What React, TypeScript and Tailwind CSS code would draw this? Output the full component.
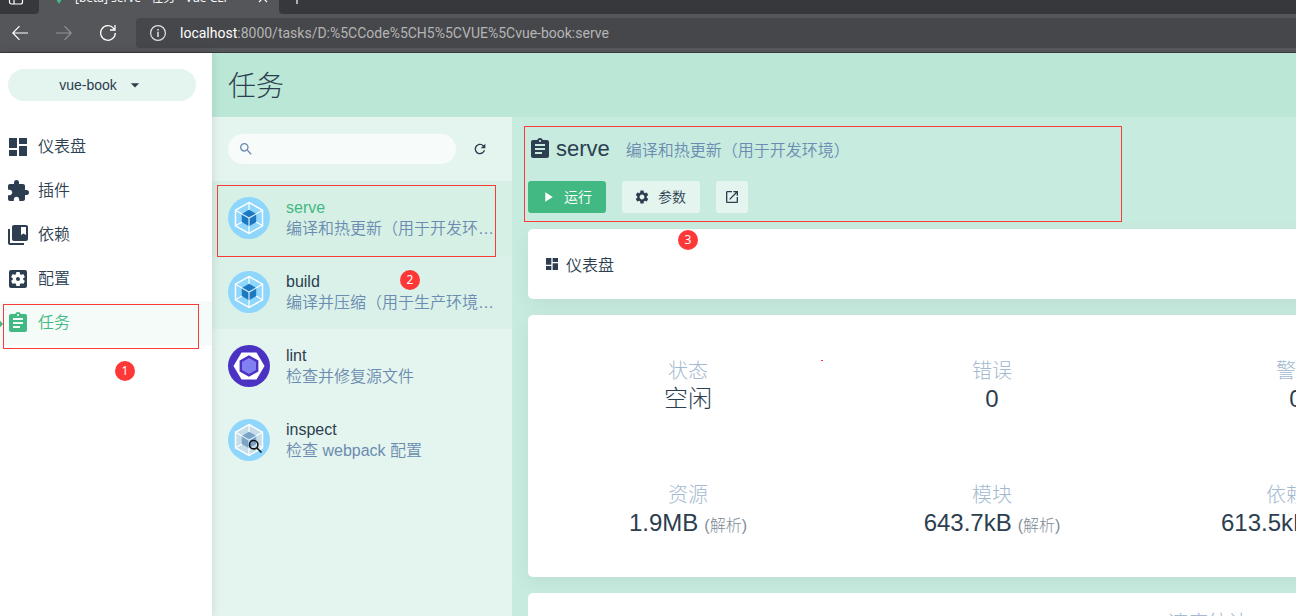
import React, { useState } from "react";
import {
  MdArrowDropDown,
  MdAssignment,
  MdCollectionsBookmark,
  MdDashboard,
  MdExtension,
  MdOpenInNew,
  MdPlayArrow,
  MdRefresh,
  MdSearch,
  MdSettings,
  MdSettingsApplications
} from "react-icons/md";

const navItems = [
  { label: "仪表盘", icon: MdDashboard },
  { label: "插件", icon: MdExtension },
  { label: "依赖", icon: MdCollectionsBookmark },
  { label: "配置", icon: MdSettingsApplications },
  { label: "任务", icon: MdAssignment, active: true }
];

const tasks = [
  { name: "serve", description: "编译和热更新（用于开发环境）", icon: "webpack", row: "bg-[#d7f0e5]", active: true },
  { name: "build", description: "编译并压缩（用于生产环境…", icon: "webpack", row: "bg-[#daf1e9]" },
  { name: "lint", description: "检查并修复源文件", icon: "eslint", row: "" },
  { name: "inspect", description: "检查 webpack 配置", icon: "inspect", row: "" }
];

const stats = [
  { label: "状态", value: "空闲" },
  { label: "错误", value: "0" },
  { label: "警告", value: "0" },
  { label: "资源", value: "1.9MB", note: "(解析)" },
  { label: "模块", value: "643.7kB", note: "(解析)" },
  { label: "依赖项", value: "613.5kB", note: "(95.3%)" }
];

function WebpackIcon({ muted = false }: { muted?: boolean }) {
  const cube = muted ? "#7aa3c6" : "#1c78c0";
  return (
    <svg className="size-[42px] shrink-0" viewBox="0 0 42 42" aria-hidden="true">
      <circle cx="21" cy="21" r="21" fill="#8ed6fb" />
      <path d="M21 5.5 34.5 13.2v15.6L21 36.5 7.5 28.8V13.2z" fill={muted ? "#c5dde9" : "#8ed6fb"} stroke="#fff" strokeWidth="1.5" />
      <path d="M21 5.5V13M34.5 13.2 28 17M34.5 28.8 28 25M21 36.5V29M7.5 28.8 14 25M7.5 13.2 14 17" stroke="#fff" strokeWidth="1.2" />
      <path d="M21 12.8 28.2 16.9v8.2L21 29.2l-7.2-4.1v-8.2z" fill={cube} />
      <path d="M13.8 16.9 21 21l7.2-4.1M21 21v8.2" fill="none" stroke="#d5ecf9" strokeWidth="1.2" />
      {muted && (
        <g fill="none" stroke="#111" strokeWidth="1.6">
          <circle cx="25.7" cy="25.7" r="4.2" />
          <path d="m28.7 28.7 4.8 4.8" />
        </g>
      )}
    </svg>
  );
}

function EslintIcon() {
  return (
    <svg className="size-[42px] shrink-0" viewBox="0 0 42 42" aria-hidden="true">
      <circle cx="21" cy="21" r="21" fill="#4b32c3" />
      <path d="M13.5 7.5h15L36.5 21l-8 13.5h-15L5.5 21z" fill="#fff" />
      <path d="m21 10.2 9.4 5.4v10.8L21 31.8l-9.4-5.4V15.6z" fill="#4b32c3" />
      <path d="m21 13 7 4v8l-7 4-7-4v-8z" fill="#8080f2" />
    </svg>
  );
}

function TaskIcon({ type }: { type: string }) {
  if (type === "eslint") return <EslintIcon />;
  return <WebpackIcon muted={type === "inspect"} />;
}

function BrowserBar() {
  return (
    <div className="shrink-0 bg-[#55565a] border-b border-[#39393c] font-normal text-white font-['Open_Sans','Noto_Sans_CJK_SC',sans-serif]">
      <div className="flex h-[14px] items-end overflow-hidden bg-[#55565a]">
        <button type="button" aria-label="标签页操作" className="flex h-6 w-[39px] items-start pl-2 bg-[#37383b] rounded-br">
          <svg className="size-4" viewBox="0 0 16 16" fill="none" stroke="#fff" strokeWidth="1.2">
            <rect x="1.5" y="1" width="13" height="13" rx="2" />
            <path d="M1.5 8h13M6 8v6" />
          </svg>
        </button>
        <div className="flex h-9 w-60 items-start pt-3 pl-3">
          <svg className="size-4" viewBox="0 0 16 16">
            <path d="M0 1h3l5 8 5-8h3L8 14z" fill="#42b983" />
          </svg>
          <span className="grow pl-2 text-xs leading-4 whitespace-nowrap">[beta] serve - 任务 - Vue CLI</span>
          <button type="button" aria-label="关闭标签页" className="mr-2">
            <svg className="size-4" viewBox="0 0 16 16" stroke="#fff" strokeWidth="1.2">
              <path d="m4 4 8 8M12 4l-8 8" />
            </svg>
          </button>
        </div>
        <div className="flex h-6 grow items-start rounded-bl bg-[#37383b] pl-2.5">
          <button type="button" aria-label="新建标签页">
            <svg className="size-4" viewBox="0 0 16 16" stroke="#fff" strokeWidth="1.2">
              <path d="M8 1v13M1 7h14" />
            </svg>
          </button>
        </div>
      </div>
      <div className="flex h-[38px] items-center">
        <div className="flex w-[136px] shrink-0 items-center gap-7 pl-3">
          <button type="button" aria-label="后退">
            <svg className="size-4" viewBox="0 0 16 16" fill="none" stroke="#fff" strokeWidth="1.2">
              <path d="M16 8H.8M7.5 1.2.8 8l6.7 6.8" />
            </svg>
          </button>
          <button type="button" aria-label="前进">
            <svg className="size-4" viewBox="0 0 16 16" fill="none" stroke="#929397" strokeWidth="1.2">
              <path d="M0 8h15.2M8.5 1.2 15.2 8l-6.7 6.8" />
            </svg>
          </button>
          <button type="button" aria-label="刷新">
            <svg className="size-4" viewBox="0 0 16 16" fill="none" stroke="#fff" strokeWidth="1.3">
              <path d="M15.3 8A7.3 7.3 0 1 1 13.6 3.3L15 5M15 0v5h-5" />
            </svg>
          </button>
        </div>
        <div className="flex h-[30px] grow items-center gap-3.5 rounded-l bg-[#46474a] pl-3.5">
          <svg className="size-4" viewBox="0 0 16 16" fill="none" stroke="#e4e4e5" strokeWidth="1.2">
            <circle cx="8" cy="8" r="7.4" />
            <path d="M8 6.8V12M8 4v1.5" strokeWidth="1.5" />
          </svg>
          <div className="font-['Roboto',sans-serif] text-sm leading-5 whitespace-nowrap text-[#b5b5b7]">
            <span className="text-white">localhost</span>:8000/tasks/D:%5CCode%5CH5%5CVUE%5Cvue-book:serve
          </div>
        </div>
      </div>
    </div>
  );
}

function Sidebar() {
  return (
    <aside className="z-10 w-[212px] shrink-0 bg-white shadow-[0_0_10px_rgba(0,0,0,0.12)]">
      <div className="pt-4 pr-4 pl-2">
        <button type="button" className="flex h-8 w-full items-center justify-center gap-2 rounded-full bg-[#e4f4ee] text-sm">
          vue-book
          <MdArrowDropDown className="size-5" />
        </button>
      </div>
      <nav className="mt-6">
        {navItems.map((item) => (
          <a
            key={item.label}
            href="#"
            className={
              item.active
                ? "relative flex h-11 items-center gap-2 bg-[#f5fbf8] pl-1.5 text-[#42b983]"
                : "flex h-11 items-center gap-2 pl-1.5"
            }
          >
            {item.active && <span className="absolute top-5 -left-1 size-1.5 rotate-45 bg-[#42b983]" />}
            <item.icon className="size-6" />
            {item.label}
          </a>
        ))}
      </nav>
    </aside>
  );
}

function TaskList() {
  const [search, setSearch] = useState("");

  return (
    <section className="w-[300px] shrink-0 bg-[#e4f4ee]">
      <div className="flex h-16 items-center gap-2 px-4">
        <label className="flex h-[30px] grow items-center gap-2 rounded-full bg-[#f7fbfa] px-2.5">
          <MdSearch className="size-4 shrink-0 text-[#6b8cb0]" />
          <input
            type="text"
            aria-label="搜索任务"
            value={search}
            onChange={(e) => setSearch(e.target.value)}
            className="w-full min-w-0 bg-transparent text-sm outline-none"
          />
        </label>
        <button type="button" aria-label="刷新任务" className="flex size-8 items-center justify-center">
          <MdRefresh className="size-4" />
        </button>
      </div>
      <ul>
        {tasks.filter((task) => task.name.includes(search)).map((task) => (
          <li key={task.name} className={task.row}>
            <a href="#" className="flex h-[74px] items-center gap-4 px-4">
              <TaskIcon type={task.icon} />
              <div className="min-w-0 leading-[21px]">
                <div className={task.active ? "text-[#42b983]" : ""}>{task.name}</div>
                <div className="truncate text-[#6b8cb0]">{task.description}</div>
              </div>
            </a>
          </li>
        ))}
      </ul>
    </section>
  );
}

function TaskDetails() {
  return (
    <section className="min-w-0 grow overflow-hidden bg-[#c7ebdf] px-4">
      <div className="flex h-16 items-center gap-4">
        <h2 className="flex items-center gap-1 text-[22px] leading-8">
          <MdAssignment className="size-6" />
          serve
        </h2>
        <span className="pt-1 text-[#6b8cb0]">编译和热更新（用于开发环境）</span>
      </div>
      <div className="flex gap-4 text-sm">
        <button type="button" className="flex h-8 w-[78px] items-center gap-2 rounded-[3px] bg-[#42b983] pl-3 text-white">
          <MdPlayArrow className="size-4" />
          运行
        </button>
        <button type="button" className="flex h-8 w-[78px] items-center gap-2 rounded-[3px] bg-[#e4f4ee] pl-3">
          <MdSettings className="size-4" />
          参数
        </button>
        <button type="button" aria-label="打开应用" className="flex size-8 items-center justify-center rounded-[3px] bg-[#e4f4ee]">
          <MdOpenInNew className="size-4" />
        </button>
      </div>

      {/* dashboard keeps its full width and runs off the right side */}
      <div className="mt-4 flex w-[1360px] flex-col gap-4">
        <div className="flex h-[70px] items-center gap-1.5 rounded-[5px] bg-white px-4 shadow-[0_6px_20px_rgba(0,0,0,0.05)]">
          <MdDashboard className="size-4" />
          <span className="pt-1">仪表盘</span>
        </div>
        <div className="rounded-[5px] bg-white px-2 pt-2 pb-1.5 shadow-[0_6px_20px_rgba(0,0,0,0.05)]">
          <dl className="grid w-[912px] grid-cols-3 font-light">
            {stats.map((stat) => (
              <div key={stat.label} className="flex h-[124px] flex-col items-center justify-center">
                <dt className="text-xl leading-7 text-[#a3b9d0]">{stat.label}</dt>
                <dd className="flex items-baseline gap-1.5 text-2xl leading-7">
                  {stat.value}
                  {stat.note && <span className="text-base leading-6 text-[#808b96]">{stat.note}</span>}
                </dd>
              </div>
            ))}
          </dl>
        </div>
        <div className="rounded-[5px] bg-white pt-4 pb-6 text-center text-xl leading-7 font-light text-[#a3b9d0]">速度统计</div>
      </div>
    </section>
  );
}

function Annotations() {
  return (
    <div className="pointer-events-none font-['Noto_Sans',sans-serif] text-xs font-normal text-white">
      <div className="absolute top-[304px] left-[3px] z-20 h-[45px] w-[196px] border border-[#fb3a3a]" />
      <div className="absolute top-[185px] left-[217px] z-20 h-[72px] w-[279px] border border-[#fb3a3a]" />
      <div className="absolute top-[126px] left-[524px] z-20 h-24 w-[598px] border border-[#fb3a3a]" />
      <span className="absolute top-[361px] left-[115px] z-20 flex size-5 items-center justify-center rounded-full bg-[#fe3737]">1</span>
      <span className="absolute top-[270px] left-[400px] z-20 flex size-5 items-center justify-center rounded-full bg-[#fe3737]">2</span>
      <span className="absolute top-[230px] left-[678px] z-20 flex size-5 items-center justify-center rounded-full bg-[#fe3737]">3</span>
      <div className="absolute top-[360px] left-[821px] z-20 h-px w-0.5 bg-[#fe3737]" />
    </div>
  );
}

export default function App() {
  return (
    <div className="relative flex h-screen flex-col overflow-hidden font-['Liberation_Sans','Noto_Sans_CJK_SC',sans-serif] text-base font-[350] text-[#2c3e50]">
      <BrowserBar />
      <div className="flex min-h-0 grow">
        <Sidebar />
        <main className="flex min-w-0 grow flex-col">
          <header className="flex h-16 shrink-0 items-center bg-[#bbe7d6] px-4">
            <h1 className="pt-1 text-[28px] leading-10 font-light">任务</h1>
          </header>
          <div className="flex min-h-0 grow">
            <TaskList />
            <TaskDetails />
          </div>
        </main>
      </div>
      <Annotations />
    </div>
  );
}
